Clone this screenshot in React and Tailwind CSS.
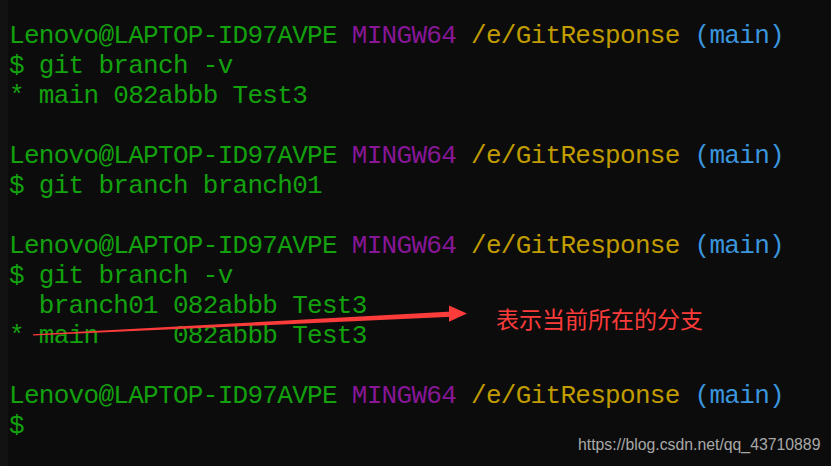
import React from "react";

// Campbell palette, same as the Windows terminal in the screenshot
const C = {
  green: "text-[#13a10e]",
  purple: "text-[#881798]",
  yellow: "text-[#c19c00]",
  blue: "text-[#3a96dd]",
};

const Prompt = () => (
  <div className="h-[30px] leading-[30px]">
    <span className={C.green}>Lenovo@LAPTOP-ID97AVPE</span>{" "}
    <span className={C.purple}>MINGW64</span>{" "}
    <span className={C.yellow}>/e/GitResponse</span>{" "}
    <span className={C.blue}>(main)</span>
  </div>
);

const Line = ({ children }) => (
  <div className={`h-[30px] leading-[30px] ${C.green}`}>{children}</div>
);

const Blank = () => <div className="h-[30px]" />;

const Arrow = () => (
  <svg
    className="absolute left-0 top-0 pointer-events-none"
    width="831"
    height="466"
    viewBox="0 0 831 466"
  >
    <polygon points="33,334.3 452,311.5 452,316.8 33,335.6" fill="#fc3b3b" />
    <polygon points="449,305.5 467,313.5 449,321.8" fill="#fc3b3b" />
  </svg>
);

export default function App() {
  return (
    <div className="relative w-[831px] h-[466px] overflow-hidden bg-[#0c0c0c] flex">
      {/* slightly lighter left gutter */}
      <div className="w-[8px] h-full bg-[#121212]" />

      {/* Terminal output */}
      <div
        className="pt-[21px] pl-[1px] whitespace-pre text-[26px] tracking-[-0.7px]"
        style={{ fontFamily: '"Liberation Mono", "DejaVu Sans Mono", monospace' }}
      >
        <Prompt />
        <Line>$ git branch -v</Line>
        <Line>* main 082abbb Test3</Line>
        <Blank />
        <Prompt />
        <Line>$ git branch branch01</Line>
        <Blank />
        <Prompt />
        <Line>$ git branch -v</Line>
        <Line>  branch01 082abbb Test3</Line>
        <Line>* main     082abbb Test3</Line>
        <Blank />
        <Prompt />
        <Line>$</Line>
      </div>

      {/* Annotation */}
      <Arrow />
      <div
        className="absolute left-[496px] top-[302px] text-[23px] leading-[32px] text-[#fc3b3b]"
        style={{ fontFamily: '"Noto Sans CJK SC", "Noto Sans", sans-serif' }}
      >
        表示当前所在的分支
      </div>

      {/* Watermark */}
      <div
        className="absolute left-[578px] top-[435px] text-[15.8px] leading-[20px] text-[#a8a8a8]"
        style={{ fontFamily: '"Liberation Sans", Arial, sans-serif' }}
      >
        https://blog.csdn.net/qq_43710889
      </div>
    </div>
  );
}
